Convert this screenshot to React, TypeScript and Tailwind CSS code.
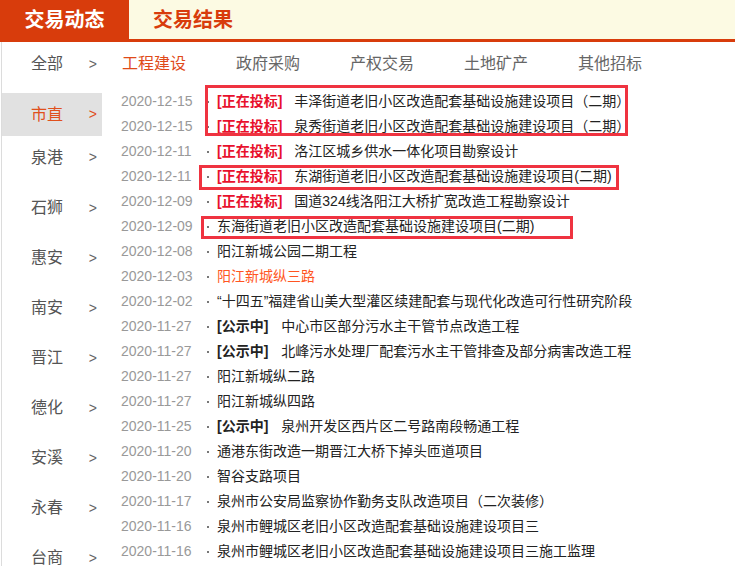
import React from "react";

type Row = { date: string; tag?: "bid" | "pub"; title: string; orange?: boolean };

const rows: Row[] = [
  { date: "2020-12-15", tag: "bid", title: "丰泽街道老旧小区改造配套基础设施建设项目（二期）" },
  { date: "2020-12-15", tag: "bid", title: "泉秀街道老旧小区改造配套基础设施建设项目（二期）" },
  { date: "2020-12-11", tag: "bid", title: "洛江区城乡供水一体化项目勘察设计" },
  { date: "2020-12-11", tag: "bid", title: "东湖街道老旧小区改造配套基础设施建设项目(二期)" },
  { date: "2020-12-09", tag: "bid", title: "国道324线洛阳江大桥扩宽改造工程勘察设计" },
  { date: "2020-12-09", title: "东海街道老旧小区改造配套基础设施建设项目(二期)" },
  { date: "2020-12-08", title: "阳江新城公园二期工程" },
  { date: "2020-12-03", title: "阳江新城纵三路", orange: true },
  { date: "2020-12-02", title: "“十四五”福建省山美大型灌区续建配套与现代化改造可行性研究阶段" },
  { date: "2020-11-27", tag: "pub", title: "中心市区部分污水主干管节点改造工程" },
  { date: "2020-11-27", tag: "pub", title: "北峰污水处理厂配套污水主干管排查及部分病害改造工程" },
  { date: "2020-11-27", title: "阳江新城纵二路" },
  { date: "2020-11-27", title: "阳江新城纵四路" },
  { date: "2020-11-25", tag: "pub", title: "泉州开发区西片区二号路南段畅通工程" },
  { date: "2020-11-20", title: "通港东街改造一期晋江大桥下掉头匝道项目" },
  { date: "2020-11-20", title: "智谷支路项目" },
  { date: "2020-11-17", title: "泉州市公安局监察协作勤务支队改造项目（二次装修）" },
  { date: "2020-11-16", title: "泉州市鲤城区老旧小区改造配套基础设施建设项目三" },
  { date: "2020-11-16", title: "泉州市鲤城区老旧小区改造配套基础设施建设项目三施工监理" },
];

const cats = ["工程建设", "政府采购", "产权交易", "土地矿产", "其他招标"];
const areas = ["石狮", "惠安", "南安", "晋江", "德化", "安溪", "永春", "台商"];

function SideItem({ name, active, className }: { name: string; active?: boolean; className: string }) {
  return (
    <div
      className={
        "flex shrink-0 items-center justify-between pl-[29px] pr-[5px] text-[16px] " +
        (active ? "bg-[#e1e1e1] text-[#e0501c] " : "text-[#555] ") +
        className
      }
    >
      <span>{name}</span>
      <span className={"text-[14px] " + (active ? "text-[#e0501c]" : "text-[#666]")}>&gt;</span>
    </div>
  );
}

export default function App() {
  return (
    <div className="relative w-[735px] h-[566px] overflow-hidden bg-white font-[family-name:'Liberation_Sans','Noto_Sans_CJK_SC',sans-serif]">
      {/* header tabs */}
      <div className="flex h-[42px] border-b-[3px] border-[#d83c0c] bg-[#fcfae3]">
        <div className="flex w-[129px] items-center justify-center bg-[#d83c0c] text-[20px] font-bold text-white">
          交易动态
        </div>
        <div className="flex items-center pl-[24px] text-[20px] font-bold text-[#d83c0c]">交易结果</div>
      </div>

      {/* body */}
      <div className="ml-px flex items-start border-l border-[#dcdcdc] min-h-[560px]">
        {/* sidebar */}
        <div className="flex w-[100px] shrink-0 flex-col">
          <SideItem name="全部" className="h-[44px]" />
          <SideItem name="市直" active className="mt-[7px] h-[43px]" />
          <SideItem name="泉港" className="h-[43px]" />
          <div className="mt-[4px] flex flex-col">
            {areas.map((a) => (
              <SideItem key={a} name={a} className="h-[50px]" />
            ))}
          </div>
        </div>

        {/* main */}
        <div className="flex flex-1 flex-col">
          <div className="flex h-[44px] items-center gap-[50px] pl-[20px] text-[16px] text-[#666]">
            {cats.map((c, i) => (
              <span key={c} className={i === 0 ? "text-[#e04a19]" : ""}>
                {c}
              </span>
            ))}
          </div>
          <div className="flex flex-col pt-[3px] pl-[19px]">
            {rows.map((r, i) => (
              <div key={i} className="flex h-[25px] shrink-0 items-center whitespace-nowrap text-[14px]">
                <span className="w-[86px] text-[#999]">{r.date}</span>
                <span className="h-[2px] w-[2px] bg-[#777]" />
                <span className="ml-[8px] flex items-center">
                  {r.tag === "bid" && <span className="mr-[12px] font-bold text-[#e8102c]">[正在投标]</span>}
                  {r.tag === "pub" && <span className="mr-[13px] font-bold text-[#222]">[公示中]</span>}
                  <span className={r.orange ? "text-[#ff5522]" : "text-[#222]"}>{r.title}</span>
                </span>
              </div>
            ))}
          </div>
        </div>
      </div>

      {/* annotation boxes */}
      <div className="absolute left-[205px] top-[85px] h-[51px] w-[423px] border-[3px] border-[#ef3340]" />
      <div className="absolute left-[199px] top-[165px] h-[25px] w-[420px] border-[3px] border-[#ef3340]" />
      <div className="absolute left-[201px] top-[216px] h-[23px] w-[372px] border-[3px] border-[#ef3340]" />
    </div>
  );
}
